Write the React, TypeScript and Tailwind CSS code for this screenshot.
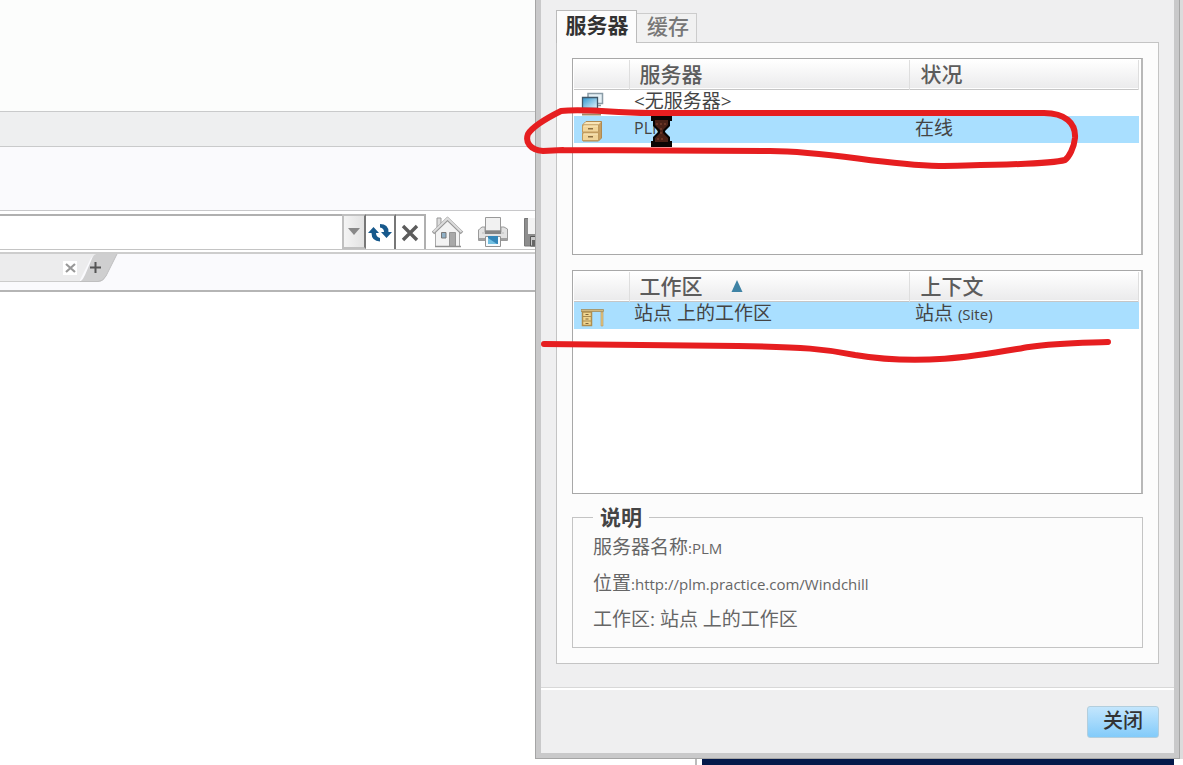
import { useState } from "react";
import type { ReactNode } from "react";
import clsx from "clsx";

interface Row {
  id: string;
  icon: ReactNode;
  name: ReactNode;
  value: ReactNode;
}

interface ListProps {
  label: string;
  headers: [string, string];
  rows: Row[];
  initial: string;
  sorted?: boolean;
  className: string;
}

/* Icons */
function RefreshIcon() {
  return (
    <svg width="24" height="20" viewBox="0 0 24 20" fill="#17598c">
      <path d="M0 10 5.500 4 11 10H8Q8 14 12 15V18.500Q3.500 18 3.500 10Z" />
      <path d="M24 9 18.500 15 13 9H16Q16 5 12 4.500L12 1Q20.500 1 20.500 9Z" />
    </svg>
  );
}

function StopIcon() {
  return (
    <svg width="18" height="18" viewBox="0 0 18 18" fill="none">
      <path d="M2 2 16 16M16 2 2 16" stroke="#5c5c5c" strokeWidth="3.4" />
    </svg>
  );
}

function HomeIcon() {
  return (
    <svg width="32" height="32" viewBox="0 0 32 32">
      <path d="M5 2H9V12H5Z" fill="#ddd" stroke="#999" />
      <path d="M3.500 15 16 4 27.500 15V30.500H3.500Z" fill="#f3f3f3" stroke="#aaa" />
      <path d="M1 17 15.500 3 30 17" fill="none" stroke="#979797" strokeWidth="3.600" />
      <path d="M1.500 16 15.500 2.500 29.500 16" fill="none" stroke="#dcdcdc" strokeWidth="2" />
      <path d="M17.500 16.500H23.500V30.500H17.500Z" fill="#a9a9a9" stroke="#969696" />
      <path d="M9.500 16.500H14V22H9.500Z" fill="#8fb0c6" stroke="#777" />
      <path d="M3 30.500H29" stroke="#909090" strokeWidth="1.500" />
    </svg>
  );
}

function PrinterIcon() {
  return (
    <svg width="32" height="32" viewBox="0 0 32 32">
      <path d="M8.500 1.500H23.500V15H8.500Z" fill="#f1f1f1" stroke="#999" />
      <path d="M2.500 13 5 11H8V16H24V11H27L30.500 13V24.500H1.500V14Z" fill="#e2e2e2" stroke="#9a9a9a" />
      <path d="M5 17H27" stroke="#bbb" />
      <path d="M8 14.500H24V18H8Z" fill="#858585" />
      <path d="M2 22H30V24H2Z" fill="#a0a0a0" />
      <path d="M8.500 20.500H23.500V30.500H8.500Z" fill="#f5fafd" stroke="#929292" />
      <path d="M11 20H21V28H11Z" fill="#3486b8" />
      <path d="M11 22 20 28H11Z" fill="#71bfe1" />
    </svg>
  );
}

function SaveIcon() {
  return (
    <svg width="32" height="32" viewBox="0 0 32 32">
      <path d="M2.500 2.500H30V30H2.500Z" fill="#8d8d8d" stroke="#777" />
      <path d="M6 2H26V18H6Z" fill="#f3f3f3" />
      <path d="M8.500 20.500H24V30H8.500Z" fill="#c9c9c9" stroke="#555" />
      <path d="M10 24H14V30H10Z" fill="#666" />
    </svg>
  );
}

function ScreensIcon() {
  return (
    <svg className="block" width="24" height="24" viewBox="0 0 24 24">
      <defs>
        <linearGradient id="screen" x1="0" y1="0" x2="1" y2="1">
          <stop offset="0" stopColor="#2e95ce" />
          <stop offset="1" stopColor="#e4f5fc" />
        </linearGradient>
      </defs>
      <path d="M7 1.500H21.500V11.500H7Z" fill="#e6f1f6" stroke="#8a9ca6" strokeWidth="1.500" />
      <path d="M1.500 5.500H16.500V16.500H1.500Z" fill="url(#screen)" stroke="#40586a" strokeWidth="1.300" />
      <path d="M17 13.500H20M7 18.500H13" stroke="#88949b" strokeWidth="1.500" />
      <path d="M1 22.500H20" stroke="#a18b66" strokeWidth="2" />
    </svg>
  );
}

function CabinetIcon() {
  return (
    <svg className="block" width="24" height="24" viewBox="0 0 24 24">
      <path d="M2 5.500 5 2.500H20.500V19L17.500 22H2Z" fill="#c79f61" stroke="#b08a50" />
      <path d="M2 5.500 5 3H20L17.500 5.500Z" fill="#f8e5b8" />
      <path d="M1.500 6H17.500V13H1.500ZM1.500 14H17.500V21.500H1.500Z" fill="#f1d59a" stroke="#c09a5d" />
      <path d="M7 9H12V10.500H7ZM7 17H12V18.500H7Z" fill="#8d7042" />
      <path d="M3 7H17M3 15H17" stroke="#fbeabf" />
    </svg>
  );
}

function DeskIcon() {
  return (
    <svg className="block" width="24" height="20" viewBox="0 0 24 20">
      <path d="M0 1.500H22.500V3.500H0Z" fill="#d3b980" stroke="#a08c5d" strokeWidth="0.800" />
      <path d="M1.500 4H10.500V17.500H1.500Z" fill="#f0d691" stroke="#b08e4e" strokeWidth="1.500" />
      <path d="M2 8.500H10M2 13H10" stroke="#a88a50" />
      <path d="M4.500 6.500H7.500M4.500 11H7.500M4.500 15.500H7.500" stroke="#80663a" />
      <path d="M20 4H22V18H20Z" fill="#e6c67e" stroke="#b6965a" strokeWidth="0.600" />
    </svg>
  );
}

function ListBox({ label, headers, rows, initial, sorted, className }: ListProps) {
  const [selected, setSelected] = useState(initial);

  return (
    <div
      className={clsx(
        "border border-r-2 border-[#a8a8a8] border-r-[#b8b8b8] bg-white pt-px pr-[2px] pl-px",
        className,
      )}
    >
      <table aria-label={label} className="w-full table-fixed border-collapse text-left">
        <colgroup>
          <col className="w-[55px]" />
          <col className="w-[280px]" />
          <col />
        </colgroup>
        <thead>
          <tr className="h-[29px] border-b border-[#c6c6c6] bg-linear-to-b from-white to-[#ebebec] text-[21px] leading-[28px] text-[#5c5c5c]">
            <th className="border-r border-[#dedede]" />
            <th className="border-r border-[#dedede] p-0 pl-[10px] font-medium">
              <span className="flex items-center gap-7">
                {headers[0]}
                {sorted && (
                  <svg width="12" height="12" viewBox="0 0 12 12">
                    <path d="M6 0 11.500 12H0.500Z" fill="#3f83a5" />
                  </svg>
                )}
              </span>
            </th>
            <th className="border-r border-[#dedede] p-0 pl-[11px] font-medium">{headers[1]}</th>
          </tr>
        </thead>
        <tbody>
          {rows.map((row) => (
            <tr
              key={row.id}
              onClick={() => setSelected(row.id)}
              aria-selected={selected === row.id}
              className={clsx(
                "h-[27px] text-[19px] leading-[22px] text-[#444]",
                selected === row.id && "bg-[#a9dfff]",
              )}
            >
              <td className="p-0 pl-[7px]">
                <div className="flex h-[26px] items-end overflow-hidden">{row.icon}</div>
              </td>
              <td className="p-0 pb-[4px] pl-[5px]">{row.name}</td>
              <td className="p-0 pb-[4px] pl-[6px]">{row.value}</td>
            </tr>
          ))}
        </tbody>
      </table>
    </div>
  );
}

const servers: Row[] = [
  { id: "none", icon: <ScreensIcon />, name: "<无服务器>", value: "" },
  {
    id: "plm",
    icon: <CabinetIcon />,
    name: <span className="text-base leading-[22px]">PLM</span>,
    value: "在线",
  },
];

const workspaces: Row[] = [
  {
    id: "site",
    icon: <DeskIcon />,
    name: "站点 上的工作区",
    value: (
      <>
        站点 <span className="text-[15px]">(Site)</span>
      </>
    ),
  },
];

function Browser() {
  return (
    <main className="flex min-w-0 flex-col overflow-hidden bg-white">
      <div className="h-[111px] bg-[#fcfdfc]" />
      <div className="h-9 border-y border-[#c9cacb] bg-[#eeeff0]" />
      <div className="h-16 border-b border-[#c8c8ca] bg-[#fafafd]" />
      {/* Address bar */}
      <div className="flex h-[39px] shrink-0 border-b border-[#c4c4c4] pt-[3px]">
        <input
          aria-label="Address"
          className="min-w-0 flex-1 border-t-2 border-[#b0b0b0] bg-white px-2 outline-none"
        />
        <button
          aria-label="History"
          className="flex w-6 items-center justify-center border-2 border-[#c0c0c0] border-r-[#777] bg-linear-to-r from-[#f4f4f4] to-[#e2e2e2]"
        >
          <svg width="12" height="7" viewBox="0 0 12 7">
            <path d="M0 0H12L6 7Z" fill="#888" />
          </svg>
        </button>
        <button
          aria-label="Refresh"
          className="flex w-[30px] items-center justify-center border-t-2 border-r-2 border-[#b0b0b0] border-r-[#777]"
        >
          <RefreshIcon />
        </button>
        <button
          aria-label="Stop"
          className="flex w-[30px] items-center justify-center border-t-2 border-r-2 border-[#b0b0b0]"
        >
          <StopIcon />
        </button>
        <div className="flex w-[109px] shrink-0 items-center gap-[13px] overflow-hidden pl-[6px]">
          <button aria-label="Home" className="shrink-0">
            <HomeIcon />
          </button>
          <button aria-label="Print" className="shrink-0">
            <PrinterIcon />
          </button>
          <button aria-label="Save" className="shrink-0">
            <SaveIcon />
          </button>
        </div>
      </div>
      {/* Page tabs */}
      <div className="h-[42px] shrink-0 border-b-2 border-[#b5b5b5] pt-[2px]">
        <div className="flex h-full border-t-2 border-[#cdcdcd] bg-[#fafafd]">
          <div className="flex h-7 w-20 items-center justify-end border-b border-[#ccc] bg-[#ececed] pr-[3px]">
            <button aria-label="Close tab" className="flex size-[14px] items-center justify-center bg-white">
              <svg width="11" height="10" viewBox="0 0 11 10">
                <path d="M1 1 10 9M10 1 1 9" stroke="#999" strokeWidth="2.2" />
              </svg>
            </button>
          </div>
          <button aria-label="New tab" className="h-7">
            <svg width="38" height="28" viewBox="0 0 38 28">
              <path d="M0 0H16L11 4 0 26Z" fill="#ececed" />
              <path d="M16 0H37L26 22Q23 28 18 28H0Q3 26 5 21L11 7Q13 1 16 0Z" fill="#cfcfd0" />
              <path d="M37 0 26 22Q23 27.500 18 27.500H0" fill="none" stroke="#bfbfc0" />
              <path d="M10 13.500H21M15.500 8V19" stroke="#555" strokeWidth="2" />
            </svg>
          </button>
        </div>
      </div>
    </main>
  );
}

function Annotations() {
  return (
    <svg
      className="pointer-events-none absolute top-0 left-0"
      width="1183"
      height="765"
      viewBox="0 0 1183 765"
      fill="none"
    >
      {/* Busy cursor */}
      <path
        d="M651 116H672V121H670V126L665 131V132L670 137V141H672V147H651V141H653V137L658 132V131L653 126V121H651Z"
        fill="#090504"
      />
      <path d="M655 120H668V125L663 130V133L668 138V142H655V138L660 133V130L655 125Z" fill="#4a2116" />
      <path d="M656 124H666M661 128V134M657 139H665" stroke="#8b4b35" strokeDasharray="2 2" />
      {/* Red pen strokes */}
      <g stroke="#e61e20" strokeWidth="6" strokeLinecap="round" strokeLinejoin="round">
        <path d="M563 150L543 151C530 150 525 142 528 134C533 126 549 117 561 111C585 108 610 113 650 113L1044 113C1065 113 1076 123 1075 138C1074 148 1069 157 1065 160C1047 165 982 165 939 166C880 165 830 151 770 151L563 150" />
        <path d="M544 344L738 346C803 347 826 349 855 355C926 367 987 354 1029 347C1057 343 1082 343 1108 342" />
      </g>
    </svg>
  );
}

export default function App() {
  const [tab, setTab] = useState("server");

  return (
    <div className="relative grid min-h-screen grid-cols-[535fr_648fr] overflow-hidden bg-[#f0f0f0] font-['Open_Sans','Noto_Sans_CJK_SC',sans-serif]">
      <Browser />

      <div className="flex min-w-0 flex-col">
        <div className="flex flex-1">
          <section
            role="dialog"
            aria-label="服务器"
            className="flex min-w-0 flex-1 flex-col border-r border-b border-l border-[#a5a5a5] bg-[#efeff0]"
          >
            <div className="flex flex-1 flex-col border-r-[5px] border-b-[5px] border-l-[5px] border-[#c9c9ca]">
              <div className="px-[15px] pt-[10px] pb-6">
                {/* Tabs */}
                <div role="tablist" className="flex h-8 items-end">
                  <button
                    role="tab"
                    aria-selected={tab === "server"}
                    onClick={() => setTab("server")}
                    className="relative z-10 -mb-px flex h-[33px] w-[81px] justify-center border border-b-0 border-[#bbb] bg-[#fcfcfc] pl-px text-[21px] leading-[28px] font-bold text-[#333]"
                  >
                    服务器
                  </button>
                  <button
                    role="tab"
                    aria-selected={tab === "cache"}
                    onClick={() => setTab("cache")}
                    className="flex h-[29px] w-[60px] justify-center border-t border-r border-[#ccc] bg-[#f1f1f1] pl-[3px] text-[21px] leading-[24px] font-medium text-[#777]"
                  >
                    缓存
                  </button>
                </div>

                <div className="border border-[#c4c4c4] bg-[#fcfcfc] p-[15px]">
                  <ListBox
                    label="服务器"
                    headers={["服务器", "状况"]}
                    rows={servers}
                    initial="plm"
                    className="mb-[15px] h-[197px]"
                  />
                  <ListBox
                    label="工作区"
                    headers={["工作区", "上下文"]}
                    rows={workspaces}
                    initial="site"
                    sorted
                    className="h-[224px]"
                  />

                  {/* Description */}
                  <fieldset className="mt-2 h-[146px] border border-[#c4c4c4] px-5 text-[19px] leading-[35px] text-[#666]">
                    <legend className="px-[7px] text-[21px] leading-[30px] font-bold text-[#444]">说明</legend>
                    <p className="-mt-[2px]">
                      服务器名称<span className="text-[15px]">:PLM</span>
                    </p>
                    <p>
                      位置<span className="text-[15px]">:http://plm.practice.com/Windchill</span>
                    </p>
                    <p>工作区: 站点 上的工作区</p>
                  </fieldset>
                </div>
              </div>

              <footer className="flex flex-1 items-start justify-end border-t-2 border-white px-[15px] pt-4 shadow-[0_-1px_0_#d8d8d8]">
                <button className="flex h-8 w-[72px] justify-center rounded-[3px] border border-[#b3cedd] bg-linear-to-b from-[#c3e6fd] to-[#82cbfa] text-[20px] leading-[27px] font-medium text-[#333]">
                  关闭
                </button>
              </footer>
            </div>
          </section>
          <div className="w-[3px] bg-[#dcdcdc]" />
        </div>
        {/* Window behind the dialog */}
        <div className="flex h-[6px] bg-white pr-[9px] pl-[160px]">
          <div className="flex-1 border-l-2 border-[#bbb] pl-[5px]">
            <div className="h-full bg-[#04194a]" />
          </div>
        </div>
      </div>

      <Annotations />
    </div>
  );
}
